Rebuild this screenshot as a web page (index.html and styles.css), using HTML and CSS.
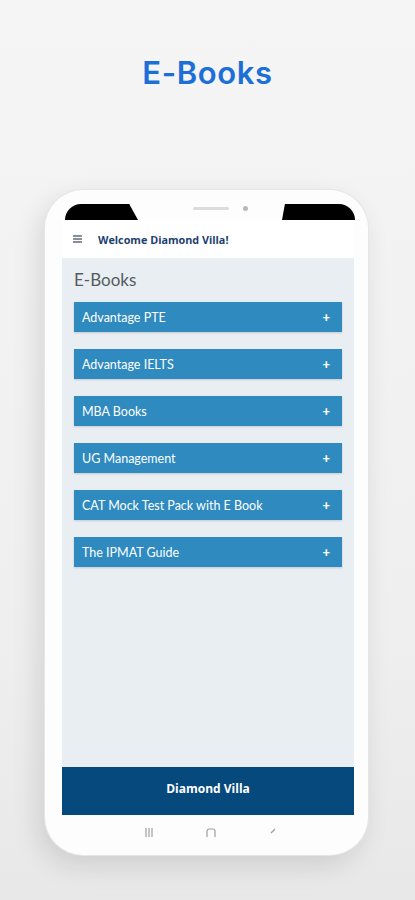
FILE: index.html
```html
<!DOCTYPE html>
<html>
<head>
  <meta name="viewport" content="width=device-width, initial-scale=1">
  <link rel="stylesheet" href="styles.css">
</head>
<body>

<h1 class="page-title">E-Books</h1>

<div class="phone">
  <div class="screen">
    <div class="notch-row">
      <span class="corner corner-left"></span>
      <span class="speaker"></span>
      <span class="camera"></span>
      <span class="corner corner-right"></span>
    </div>

    <header class="app-header">
      <svg class="burger" width="9" height="8" viewBox="0 0 9 8"><path d="M0 1h9M0 4h9M0 7h9" stroke="#5f6b7a" stroke-width="1.4"/></svg>
      <span class="welcome">Welcome Diamond Villa!</span>
    </header>

    <div class="content">
      <h2>E-Books</h2>
      <div class="item">Advantage PTE <span class="plus">+</span></div>
      <div class="item">Advantage IELTS <span class="plus">+</span></div>
      <div class="item">MBA Books <span class="plus">+</span></div>
      <div class="item">UG Management <span class="plus">+</span></div>
      <div class="item">CAT Mock Test Pack with E Book <span class="plus">+</span></div>
      <div class="item">The IPMAT Guide <span class="plus">+</span></div>
    </div>

    <footer class="app-footer">Diamond Villa</footer>

    <div class="navbar">
      <svg width="10" height="9" viewBox="0 0 10 9"><path d="M2 0v9M5 0v9M8 0v9" stroke="#9aa0a6" stroke-width="1.2"/></svg>
      <svg width="10" height="9" viewBox="0 0 10 9"><path d="M1 9V3a2 2 0 0 1 2-2h4a2 2 0 0 1 2 2v6" fill="none" stroke="#9aa0a6" stroke-width="1.2"/></svg>
      <svg width="10" height="9" viewBox="0 0 10 9"><path d="M7 1L3 5" fill="none" stroke="#9aa0a6" stroke-width="1.2"/></svg>
    </div>
  </div>
</div>

</body>
</html>
```

FILE: styles.css
```css
body {
  margin: 0;
  height: 900px;
  overflow: hidden;
  background: linear-gradient(180deg, #f5f5f5 0%, #efefef 70%, #e8e8e8 100%);
  font-family: Lato, "Open Sans", sans-serif;
}

.page-title {
  margin: 0;
  padding-top: 54px;
  text-align: center;
  font-family: Inter, "Open Sans", sans-serif;
  font-weight: 600;
  font-size: 31px;
  letter-spacing: 0.6px;
  color: #1c6fd6;
  height: 190px;
  box-sizing: border-box;
}

.phone {
  width: 323px;
  height: 665px;
  margin: 0 0 0 45px;
  background: #fdfdfd;
  border-radius: 38px;
  box-shadow: 0 0 0 1px #e6e6e6, -6px 10px 28px rgba(0, 0, 0, 0.12);
  padding: 12px 14px 0 17px;
  box-sizing: border-box;
}

.screen {
  display: flex;
  flex-direction: column;
  height: 635px;
}

.notch-row {
  display: flex;
  align-items: flex-end;
  height: 18px;
}

.corner {
  width: 73px;
  height: 16px;
  background: #000;
}

.corner-left {
  margin-left: 3px;
  border-radius: 22px 0 0 0;
  clip-path: polygon(0 0, 88% 0, 100% 100%, 0 100%);
}

.corner-right {
  margin-left: auto;
  margin-right: -1px;
  border-radius: 0 22px 0 0;
  clip-path: polygon(4% 0, 100% 0, 100% 100%, 0 100%);
}

.speaker {
  width: 36px;
  height: 3px;
  background: #dcdcdc;
  border-radius: 2px;
  margin: 0 0 10px 55px;
}

.camera {
  width: 5px;
  height: 5px;
  background: #b8b8b8;
  border-radius: 50%;
  margin: 0 0 9px 14px;
}

.app-header {
  display: flex;
  align-items: center;
  height: 38px;
  background: #fff;
  padding-left: 11px;
}

.burger {
  margin-right: 16px;
}

.welcome {
  font-family: "Open Sans", sans-serif;
  font-weight: 700;
  font-size: 10.8px;
  color: #1d3f70;
}

.content {
  flex: 1;
  background: #e9eef2;
  padding: 11px 12px 0 12px;
}

.content h2 {
  margin: 0 0 11px;
  font-weight: 400;
  font-size: 17px;
  color: #555b61;
  line-height: 22px;
}

.item {
  display: flex;
  justify-content: space-between;
  align-items: center;
  height: 30px;
  margin-bottom: 17px;
  padding: 0 12px 0 8px;
  background: #2e8abf;
  color: #fff;
  font-size: 12.5px;
  box-shadow: 0 1px 2px rgba(0, 0, 0, 0.15);
}

.plus {
  font-weight: 900;
  font-size: 13px;
}

.app-footer {
  height: 48px;
  display: flex;
  align-items: center;
  justify-content: center;
  padding-bottom: 6px;
  box-sizing: border-box;
  background: #05497d;
  color: #fff;
  font-family: "Open Sans", sans-serif;
  font-weight: 700;
  font-size: 12px;
}

.navbar {
  display: flex;
  justify-content: space-around;
  align-items: flex-end;
  height: 22px;
  padding: 0 50px 0 56px;
  overflow: hidden;
}
```
